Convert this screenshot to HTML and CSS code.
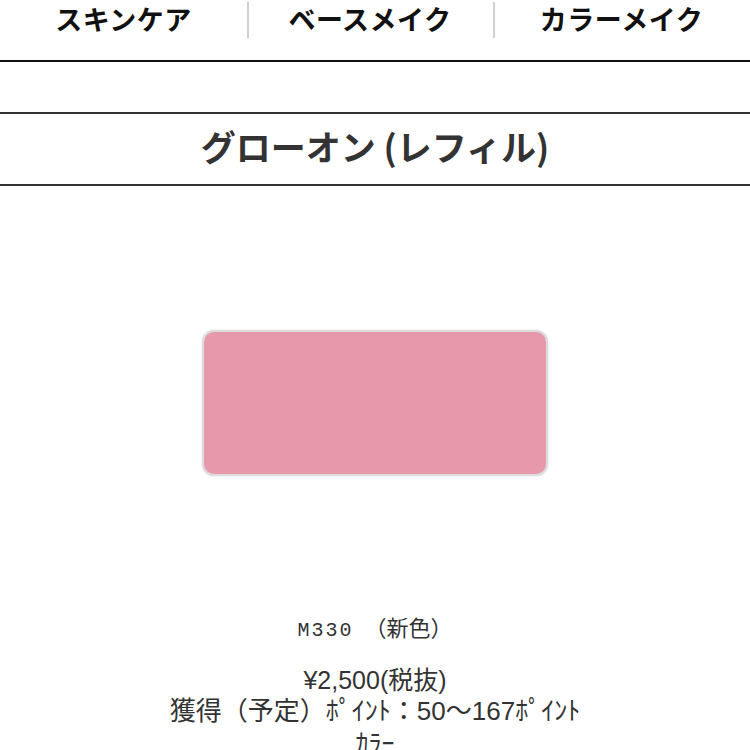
FILE: index.html
```html
<!DOCTYPE html>
<html lang="ja">
<head>
<meta charset="utf-8">
<link rel="stylesheet" href="styles.css">
</head>
<body>
<nav class="nav">
  <div class="nav-item">スキンケア</div>
  <div class="nav-item sep">ベースメイク</div>
  <div class="nav-item sep">カラーメイク</div>
</nav>
<div class="spacer"></div>
<h1 class="title">グローオン (レフィル)</h1>
<div class="visual">
  <div class="swatch"></div>
</div>
<div class="info">
  <p class="shade"><span class="code">M330</span>　（新色）</p>
  <p class="price">¥2,500(税抜)</p>
  <p class="points">獲得（予定）ﾎﾟｲﾝﾄ：50～167ﾎﾟｲﾝﾄ</p>
  <p class="cat">ｶﾗｰ</p>
</div>
</body>
</html>
```
FILE: styles.css
```css
html, body {
  margin: 0;
  padding: 0;
  background: #fff;
}
body {
  font-family: "Noto Sans CJK JP", "Liberation Sans", sans-serif;
  color: #333;
}
.nav {
  display: grid;
  grid-template-columns: 247px 246px 1fr;
  height: 60px;
  border-bottom: 2px solid #111;
}
.nav-item {
  font-size: 27px;
  font-weight: 700;
  color: #111;
  text-align: center;
  line-height: 38px;
  height: 40px;
  letter-spacing: 0.5px;
}
.nav-item.sep {
  background: linear-gradient(#d0d0d0, #d0d0d0) 0 2px / 2px 36px no-repeat;
}
.spacer {
  height: 50px;
  border-bottom: 2px solid #333;
}
.title {
  margin: 0;
  height: 70px;
  line-height: 64px;
  text-align: center;
  font-size: 35px;
  font-weight: 700;
  color: #333;
  border-bottom: 2px solid #333;
  font-family: "Noto Sans CJK JP", sans-serif;
}
.visual {
  display: flex;
  justify-content: center;
  padding-top: 144px;
  height: 150px;
}
.swatch {
  width: 342px;
  height: 142px;
  background: #e898ab;
  border-radius: 12px;
  border: 2px solid #dcdcdc;
  box-shadow: 0 0 2px rgba(0,0,0,0.15);
}
.info {
  text-align: center;
  padding-top: 132px;
}
.info p {
  margin: 0;
}
.shade {
  font-size: 22px;
  line-height: 28px;
  color: #333;
}
.code {
  font-family: "Liberation Mono", monospace;
  font-size: 20px;
  letter-spacing: 2px;
}
.price {
  margin-top: 20px !important;
  font-size: 25px;
  line-height: 30px;
  font-family: "Liberation Sans", "Noto Sans CJK JP", sans-serif;
}
.points {
  font-size: 26px;
  line-height: 32px;
  font-family: "Liberation Sans", "Noto Sans CJK JP", sans-serif;
}
.cat {
  font-size: 26px;
  line-height: 30px;
}
```
